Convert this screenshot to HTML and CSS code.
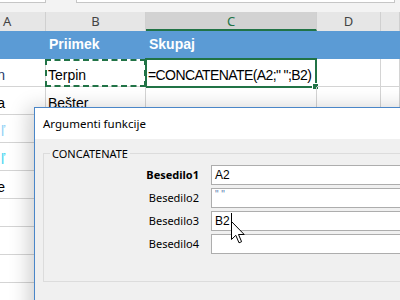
FILE: index.html
```html
<!DOCTYPE html>
<html lang="sl">
<head>
    <meta charset="UTF-8">
    <title>Argumenti funkcije</title>
    <link rel="stylesheet" href="styles.css">
</head>
<body>
<div class="sheet">
    <!-- remains of the formula bar -->
    <div class="topstrip">
        <div class="namebox"></div>
        <div class="formulabox"></div>
    </div>

    <div class="row colheads">
        <div class="col-a head">A</div>
        <div class="col-b head">B</div>
        <div class="col-c head selected">C</div>
        <div class="col-d head">D</div>
        <div class="col-e head"></div>
    </div>

    <div class="row title-row">
        <div class="col-a cell"></div>
        <div class="col-b cell">Priimek</div>
        <div class="col-c cell">Skupaj</div>
        <div class="col-d cell"></div>
        <div class="col-e cell"></div>
    </div>

    <div class="row data-row">
        <div class="col-a cell cut"><span class="navy">Jan</span></div>
        <div class="col-b cell copied">Terpin</div>
        <div class="col-c cell active"><span class="formula">=CONCATENATE(A2;" ";B2)</span></div>
        <div class="col-d cell"></div>
        <div class="col-e cell"></div>
    </div>
    <div class="row data-row">
        <div class="col-a cell cut">Maja</div>
        <div class="col-b cell">Bešter</div>
        <div class="col-c cell"></div>
        <div class="col-d cell"></div>
        <div class="col-e cell"></div>
    </div>
    <div class="row data-row">
        <div class="col-a cell cut"><span class="light">ľ</span></div>
        <div class="col-b cell"></div>
        <div class="col-c cell"></div>
        <div class="col-d cell"></div>
        <div class="col-e cell"></div>
    </div>
    <div class="row data-row">
        <div class="col-a cell cut"><span class="cyan">ľ</span></div>
        <div class="col-b cell"></div>
        <div class="col-c cell"></div>
        <div class="col-d cell"></div>
        <div class="col-e cell"></div>
    </div>
    <div class="row data-row">
        <div class="col-a cell cut">Mile</div>
        <div class="col-b cell"></div>
        <div class="col-c cell"></div>
        <div class="col-d cell"></div>
        <div class="col-e cell"></div>
    </div>
    <div class="row data-row"><div class="col-a cell"></div><div class="col-b cell"></div><div class="col-c cell"></div><div class="col-d cell"></div><div class="col-e cell"></div></div>
    <div class="row data-row"><div class="col-a cell"></div><div class="col-b cell"></div><div class="col-c cell"></div><div class="col-d cell"></div><div class="col-e cell"></div></div>
    <div class="row data-row"><div class="col-a cell"></div><div class="col-b cell"></div><div class="col-c cell"></div><div class="col-d cell"></div><div class="col-e cell"></div></div>
</div>

<!-- Function arguments dialog -->
<div class="dialog">
    <div class="dialog-title">Argumenti funkcije</div>
    <div class="dialog-body">
        <fieldset class="group">
            <legend>CONCATENATE</legend>
            <div class="args">
                <label class="bold">Besedilo1</label>
                <div class="field">A2</div>
                <label>Besedilo2</label>
                <div class="field quote">" "</div>
                <label>Besedilo3</label>
                <div class="field">B2<span class="caret"></span></div>
                <label>Besedilo4</label>
                <div class="field"></div>
            </div>
        </fieldset>
    </div>
</div>

<svg class="pointer" width="14" height="23" viewBox="0 0 14 23">
    <path d="M0.5 0.5 V18.5 L4.8 14.3 L8 21.8 L10.6 20.7 L7.5 13.5 H13.2 Z" fill="#fff" stroke="#000" stroke-width="1"/>
</svg>
</body>
</html>
```

FILE: styles.css
```css
body {
    margin: 0;
    width: 400px;
    height: 300px;
    overflow: hidden;
    position: relative;
    background-color: #fff;
    font-family: "Liberation Sans", Arial, sans-serif;
}

.sheet {
    width: 400px;
}

.topstrip {
    display: flex;
    height: 12px;
    background-color: #f3f3f3;
}

.namebox {
    width: 45px;
    height: 2px;
    background-color: #fff;
    border-right: 1px solid #c6c6c6;
    border-bottom: 1px solid #c6c6c6;
}

.formulabox {
    width: 317px;
    height: 2px;
    margin-left: 30px;
    background-color: #fff;
    border-left: 1px solid #c6c6c6;
    border-right: 1px solid #c6c6c6;
    border-bottom: 1px solid #c6c6c6;
}

.row {
    display: flex;
}

.col-a { width: 46px; }
.col-b { width: 100px; }
.col-c { width: 171px; }
.col-d { width: 64px; }
.col-e { flex: 1; }

.col-a, .col-b, .col-c, .col-d, .col-e {
    box-sizing: border-box;
    flex-shrink: 0;
}

/* column letters */
.colheads {
    height: 19px;
    background-color: #e6e6e6;
}

.head {
    border-right: 1px solid #d0d0d0;
    font-family: "Noto Sans", sans-serif;
    font-size: 13px;
    color: #444;
    text-align: center;
    line-height: 19px;
}

.head.col-a {
    text-align: left;
    padding-left: 3px;
}

.head.selected {
    background-color: #d2d2d2;
    border-bottom: 2px solid #217346;
    color: #217346;
    line-height: 18px;
}

/* table title row */
.title-row {
    height: 28px;
    background-color: #5b9bd5;
}

.title-row .cell {
    color: #fff;
    font-weight: bold;
    font-size: 14px;
    padding: 5px 0 0 3px;
}

.data-row {
    height: 28px;
}

.data-row .cell {
    border-right: 1px solid #d4d4d4;
    border-bottom: 1px solid #d4d4d4;
    font-size: 14px;
    color: #000;
    padding: 8px 0 0 2px;
    white-space: nowrap;
    position: relative;
}

.cell.cut {
    display: flex;
    justify-content: flex-end;
    padding-right: 40px;
    overflow: hidden;
}

.navy { color: #1f3a6a; }
.light { color: #8fd0f5; }
.cyan { color: #3fd4f0; }

.formula {
    letter-spacing: -0.6px;
}

.cell.copied::before {
    content: "";
    position: absolute;
    left: -1px;
    top: 0;
    right: -1px;
    bottom: -1px;
    border: 2px dashed #217346;
}

.cell.active::before {
    content: "";
    position: absolute;
    left: -1px;
    top: -1px;
    right: -1px;
    bottom: -2px;
    border: 2px solid #217346;
}

.cell.active::after {
    content: "";
    position: absolute;
    right: -3px;
    bottom: -4px;
    width: 5px;
    height: 5px;
    background-color: #217346;
    border: 1px solid #fff;
}

/* dialog */
.dialog {
    position: absolute;
    left: 34px;
    top: 107px;
    width: 420px;
    height: 220px;
    border: 1px solid #4a86c8;
    background-color: #f0f0f0;
    box-shadow: -6px 0 18px rgba(0, 0, 0, 0.18);
    font-family: "Noto Sans", sans-serif;
    color: #000;
}

.dialog-title {
    height: 31px;
    background-color: #fff;
    font-size: 11.5px;
    line-height: 31px;
    padding-left: 8px;
}

.dialog-body {
    padding: 7px 0 0 8px;
}

.group {
    margin: 0;
    padding: 0 0 27px 0;
    border: 1px solid #dcdcdc;
    width: 400px;
}

.group legend {
    margin-left: 6px;
    padding: 0 2px;
    font-size: 11px;
}

.args {
    display: grid;
    grid-template-columns: 155px 1fr;
    column-gap: 12px;
    row-gap: 3px;
    margin-top: 4px;
    font-size: 11px;
}

.args label {
    text-align: right;
    line-height: 20px;
}

.args label.bold {
    font-weight: bold;
}

.field {
    height: 20px;
    box-sizing: border-box;
    border: 1px solid #adadad;
    background-color: #fff;
    padding-left: 3px;
    line-height: 18px;
    font-size: 12px;
    font-family: "Liberation Sans", sans-serif;
}

.field.quote {
    color: #5b7fb0;
    font-size: 10px;
    line-height: 12px;
}

.caret {
    display: inline-block;
    width: 1px;
    height: 14px;
    background-color: #000;
    vertical-align: -2px;
    margin-left: 1px;
}

.pointer {
    position: absolute;
    left: 231px;
    top: 221px;
}
```
